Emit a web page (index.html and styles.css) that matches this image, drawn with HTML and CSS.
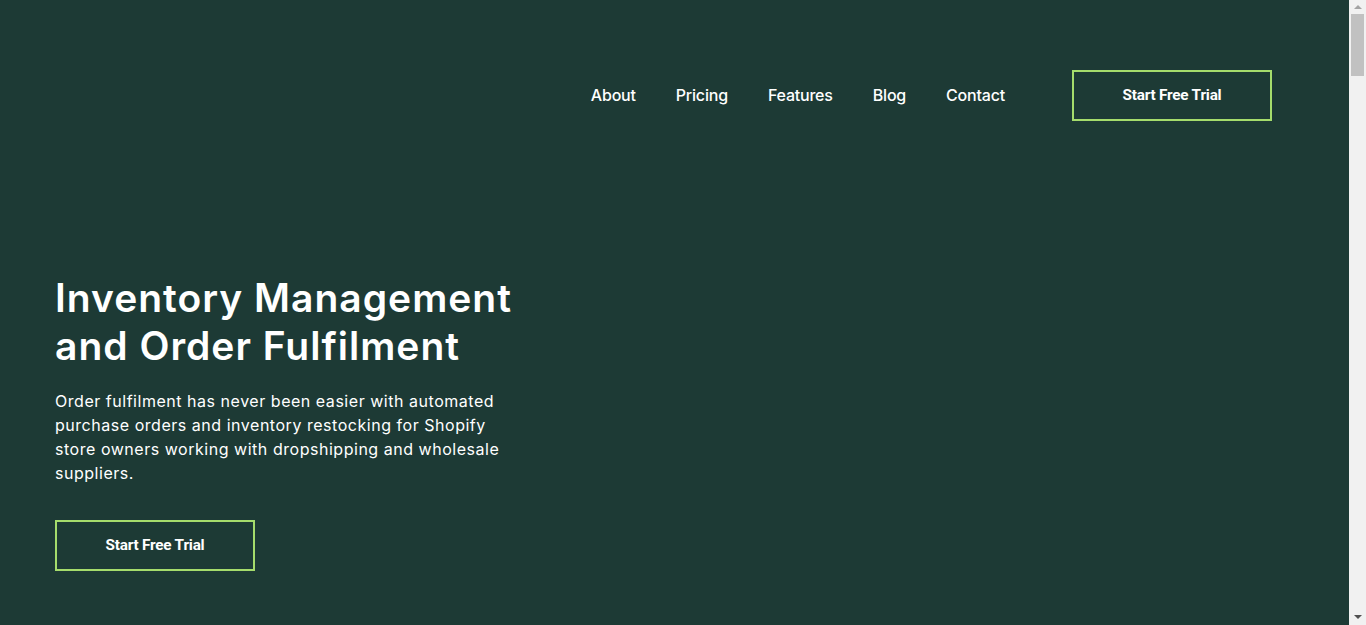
FILE: index.html
```html
<!DOCTYPE html>
<html lang="en">
<head>
<meta charset="utf-8">
<title>Inventory Management and Order Fulfilment</title>
<link rel="stylesheet" href="styles.css">
</head>
<body>
<div class="page">
  <header class="header">
    <nav class="nav">
      <a class="nav-link" href="#">About</a>
      <a class="nav-link" href="#">Pricing</a>
      <a class="nav-link" href="#">Features</a>
      <a class="nav-link" href="#">Blog</a>
      <a class="nav-link" href="#">Contact</a>
    </nav>
    <a class="btn" href="#">Start Free Trial</a>
  </header>
  <section class="hero">
    <h1 class="hero-title">Inventory Management and Order Fulfilment</h1>
    <p class="hero-text">Order fulfilment has never been easier with automated purchase orders and inventory restocking for Shopify store owners working with dropshipping and wholesale suppliers.</p>
    <a class="btn" href="#">Start Free Trial</a>
  </section>
</div>
<div class="scrollbar" aria-hidden="true">
  <span class="sb-arrow sb-up"></span>
  <span class="sb-thumb"></span>
  <span class="sb-arrow sb-down"></span>
</div>
</body>
</html>
```
FILE: styles.css
```css
html, body {
  margin: 0;
  padding: 0;
  background: #1d3a35;
}
body {
  font-family: Inter, "Open Sans", sans-serif;
  color: #ffffff;
  min-height: 625px;
}
.page {
  padding: 0 94px 0 55px;
}
.header {
  display: flex;
  justify-content: flex-end;
  align-items: center;
  padding-top: 70px;
  gap: 67px;
}
.nav {
  display: flex;
  gap: 40px;
}
.nav-link {
  color: #ffffff;
  text-decoration: none;
  font-size: 16px;
  font-weight: 500;
  letter-spacing: -0.2px;
  margin-top: -1px;
}
.btn {
  display: flex;
  align-items: center;
  justify-content: center;
  box-sizing: border-box;
  width: 200px;
  height: 51px;
  padding-bottom: 2px;
  border: 2px solid #a5dc6c;
  color: #ffffff;
  text-decoration: none;
  font-family: Roboto, sans-serif;
  font-weight: 700;
  font-size: 15.3px;
  letter-spacing: -0.2px;
}
.hero {
  padding-top: 153px;
  width: 470px;
}
.hero-title {
  margin: 0;
  font-size: 39px;
  line-height: 48px;
  font-weight: 600;
  letter-spacing: 1px;
}
.hero-text {
  margin: 19px 0 35px;
  max-width: 450px;
  font-size: 16px;
  line-height: 24px;
  font-weight: 400;
  letter-spacing: 0.53px;
}
.scrollbar {
  position: fixed;
  top: 0;
  right: 0;
  bottom: 0;
  width: 17px;
  background: #f1f1f1;
  display: flex;
  flex-direction: column;
  align-items: center;
}
.sb-arrow {
  width: 0;
  height: 0;
  border-left: 4px solid transparent;
  border-right: 4px solid transparent;
}
.sb-up {
  margin-top: 5px;
  border-bottom: 4px solid #a3a3a3;
}
.sb-thumb {
  margin-top: 5px;
  width: 13px;
  height: 62px;
  background: #c1c1c1;
}
.sb-down {
  margin-top: auto;
  margin-bottom: 6px;
  border-top: 4px solid #505050;
}
```
